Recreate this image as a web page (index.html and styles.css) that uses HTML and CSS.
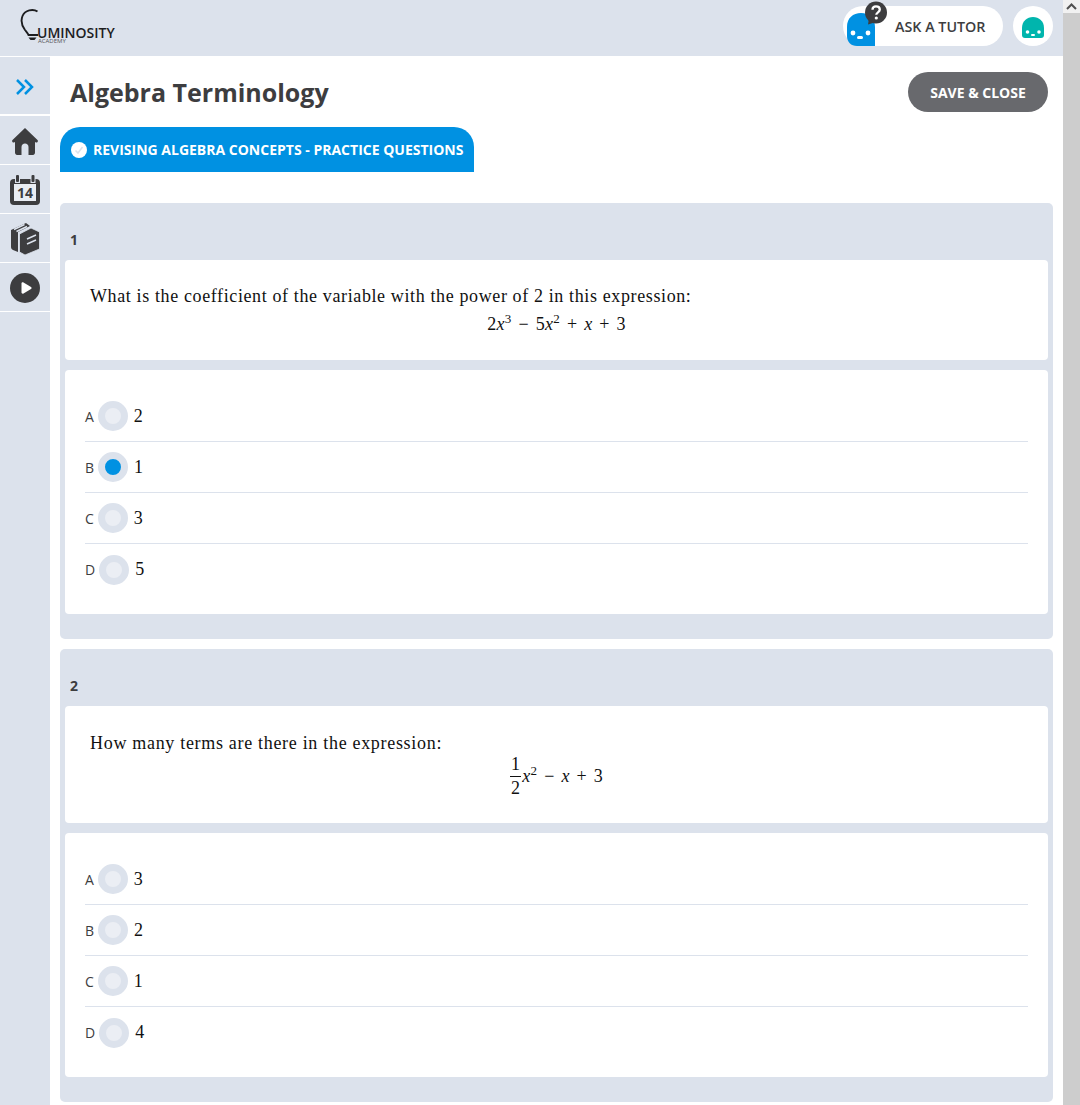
FILE: index.html
```html
<!DOCTYPE html>
<html lang="en">
  <head>
    <meta charset="UTF-8" />
    <meta name="viewport" content="width=device-width, initial-scale=1.0" />
    <title>Algebra Terminology</title>
    <link rel="stylesheet" href="styles.css">
  </head>
  <body>
    <div class="page">
      <div class="app">
        <header class="topbar">
          <div class="logo">
            <svg class="logo-bulb" width="24" height="36" viewBox="0 0 24 36">
              <path d="M18.500 5.500C14 2.500 6 4 3.500 10C1.500 15 3 20 6 24C8 26.500 9 27.500 9.500 29H19" fill="none" stroke="#1d1d1f" stroke-width="1.900"/>
              <path d="M9.500 31.500H17.500L15.500 34H11.500Z" fill="#1d1d1f"/>
            </svg>
            <span class="logo-name">UMINOSITY</span>
            <span class="logo-sub">ACADEMY</span>
          </div>
          <div class="tutor">
            <a class="tutor-pill">
              <svg class="tutor-face" width="46" height="46" viewBox="0 0 46 46">
                <path d="M4 46V27C4 18 10 13 18 13C26 13 32 18 32 27V46H14C8 46 4 42 4 36Z" fill="#0091e2"/>
                <circle cx="10" cy="33" r="2.400" fill="#fff"/>
                <circle cx="25" cy="33" r="2.400" fill="#fff"/>
                <rect x="14" y="36" width="6" height="3" rx="1.500" fill="#fff"/>
                <circle cx="33" cy="12.500" r="11" fill="#3d3d3f"/>
                <path d="M26 18L25 24.500L33 22Z" fill="#3d3d3f"/>
                <path d="M29.500 9.800C29.500 7.500 31 6.300 33 6.300C35.200 6.300 36.800 7.600 36.800 9.600C36.800 12.300 33.300 12.300 33.300 14.800" fill="none" stroke="#fff" stroke-width="2.300"/>
                <circle cx="33.300" cy="18" r="1.600" fill="#fff"/>
              </svg>
              <span>ASK A TUTOR</span>
            </a>
            <a class="avatar">
              <svg width="22" height="21" viewBox="0 0 22 21">
                <path d="M0 11C0 4 5 0 11 0C17 0 22 4 22 11V18C22 20 21 21 19 21H3C1 21 0 20 0 18Z" fill="#00b5ad"/>
                <circle cx="5.500" cy="15" r="1.800" fill="#fff"/>
                <circle cx="17" cy="15" r="1.800" fill="#fff"/>
                <rect x="9" y="17" width="4" height="2" rx="1" fill="#fff"/>
              </svg>
            </a>
          </div>
        </header>

        <div class="layout">
          <nav class="sidebar">
            <a class="side-toggle">
              <svg width="20" height="18" viewBox="0 0 20 18">
                <path d="M2 2L9 9L2 16M10 2L17 9L10 16" fill="none" stroke="#0091e2" stroke-width="2.500"/>
              </svg>
            </a>
            <a class="side-item">
              <svg width="26" height="28" viewBox="0 0 26 28">
                <path d="M13 1L25.500 13C26.500 14 25.500 16 24 15.500L23 15V25.500C23 27 22 28 21 28H16.500V20C16.500 18 15 16.500 13 16.500C11 16.500 9.500 18 9.500 20V28H5C4 28 3 27 3 25.500V15L2 15.500C.5 16 -.5 14 .5 13Z" fill="#3d3d3f"/>
              </svg>
            </a>
            <a class="side-item">
              <svg width="30" height="30" viewBox="0 0 30 30">
                <rect x="0" y="4" width="30" height="26" rx="4" fill="#3d3d3f"/>
                <rect x="4" y="9" width="22" height="17" fill="#e9edf3"/>
                <rect x="5" y="0" width="5" height="8" fill="#dce2ec"/>
                <rect x="20.500" y="0" width="5" height="8" fill="#dce2ec"/>
                <rect x="6" y="0" width="3" height="7" rx="1" fill="#3d3d3f"/>
                <rect x="21.500" y="0" width="3" height="7" rx="1" fill="#3d3d3f"/>
                <text class="cal-day" x="15" y="23" text-anchor="middle">14</text>
              </svg>
            </a>
            <a class="side-item">
              <svg width="30" height="34" viewBox="0 0 30 34">
                <path d="M1 8L16 1L20 4L8 10V30L3 28C2 27.500 1 26.500 1 25Z" fill="#3d3d3f"/>
                <path d="M9.500 12L21 6L29.500 10V27L15 33L9.500 30Z" fill="#3d3d3f" stroke="#dce2ec" stroke-width=".8"/>
                <path d="M4 7.500L14.500 2.500M6.500 9.500L17 4.500M17 17L26 13M17 22L26 18" fill="none" stroke="#dce2ec" stroke-width="1.500"/>
              </svg>
            </a>
            <a class="side-item">
              <svg width="30" height="30" viewBox="0 0 30 30">
                <circle cx="15" cy="15" r="15" fill="#3d3d3f"/>
                <path d="M11.500 10.500C11.500 9.500 12.500 9 13.500 9.500L21 14C21.800 14.500 21.800 15.500 21 16L13.500 20.500C12.500 21 11.500 20.500 11.500 19.500Z" fill="#fff"/>
              </svg>
            </a>
          </nav>

          <main class="content">
            <div class="title-row">
              <h1>Algebra Terminology</h1>
              <button class="save-btn">SAVE &amp; CLOSE</button>
            </div>

            <div class="tab">
              <svg width="16" height="16" viewBox="0 0 16 16">
                <circle cx="8" cy="8" r="8" fill="#fff"/>
                <path d="M4.500 8.500L7 11L11.500 5" fill="none" stroke="#dce2ec" stroke-width="1.500"/>
              </svg>
              <span>REVISING ALGEBRA CONCEPTS - PRACTICE QUESTIONS</span>
            </div>

            <section class="question">
              <div class="q-num">1</div>
              <div class="card q-text q-text-short">
                <p>What is the coefficient of the variable with the power of 2 in this expression:</p>
                <div class="math"><span>2<i>x</i><sup>3</sup> &minus; 5<i>x</i><sup>2</sup> + <i>x</i> + 3</span></div>
              </div>
              <div class="card answers">
                <label class="answer"><span class="letter">A</span><span class="radio"></span><span class="val">2</span></label>
                <label class="answer"><span class="letter">B</span><span class="radio checked"></span><span class="val">1</span></label>
                <label class="answer"><span class="letter">C</span><span class="radio"></span><span class="val">3</span></label>
                <label class="answer"><span class="letter">D</span><span class="radio"></span><span class="val">5</span></label>
              </div>
            </section>

            <section class="question">
              <div class="q-num">2</div>
              <div class="card q-text q-text-tall">
                <p>How many terms are there in the expression:</p>
                <div class="math math-frac">
                  <span class="frac"><span class="top">1</span><span>2</span></span>
                  <span class="frac-rest"><i>x</i><sup>2</sup> &minus; <i>x</i> + 3</span>
                </div>
              </div>
              <div class="card answers">
                <label class="answer"><span class="letter">A</span><span class="radio"></span><span class="val">3</span></label>
                <label class="answer"><span class="letter">B</span><span class="radio"></span><span class="val">2</span></label>
                <label class="answer"><span class="letter">C</span><span class="radio"></span><span class="val">1</span></label>
                <label class="answer"><span class="letter">D</span><span class="radio"></span><span class="val">4</span></label>
              </div>
            </section>
          </main>
        </div>
      </div>

      <div class="scrollbar">
        <div class="scroll-up">
          <svg width="11" height="7" viewBox="0 0 11 7">
            <path d="M1 6L5.500 1.500L10 6" fill="none" stroke="#505050" stroke-width="2"/>
          </svg>
        </div>
      </div>
    </div>
  </body>
</html>
```

FILE: styles.css
```css
* {
  box-sizing: border-box;
}
html,
body {
  margin: 0;
  height: 1105px;
  overflow: hidden;
}
body {
  font-family: "Open Sans", sans-serif;
  color: #3d3d3f;
  background: white;
}
.page {
  display: flex;
  height: 1105px;
}
.app {
  flex: 1;
  min-width: 0;
}
.scrollbar {
  width: 17px;
  background: #cdcdcd;
}
.scroll-up {
  height: 13px;
  background: #f1f1f1;
  display: flex;
  align-items: center;
  justify-content: center;
}

/* top bar */
.topbar {
  height: 56px;
  background: #dce2ec;
  display: flex;
  justify-content: space-between;
  padding: 6px 10px 0 19px;
}
.logo {
  position: relative;
  width: 110px;
  color: #1d1d1f;
}
.logo-bulb {
  position: absolute;
  left: 0;
  top: 0;
}
.logo-name {
  position: absolute;
  left: 18px;
  top: 21px;
  font-size: 14px;
  font-weight: 600;
  line-height: 11px;
}
.logo-sub {
  position: absolute;
  left: 19px;
  top: 32px;
  font-size: 6px;
  line-height: 7px;
  color: #55565a;
}
.tutor {
  display: flex;
  gap: 10px;
}
.tutor-pill {
  position: relative;
  width: 160px;
  height: 40px;
  background: white;
  border-radius: 20px;
  display: flex;
  align-items: center;
  padding-left: 52px;
  font-size: 14.300px;
  font-weight: 600;
}
.tutor-face {
  position: absolute;
  left: 0;
  top: 0;
  margin-top: -6px;
  overflow: hidden;
}
.avatar {
  width: 40px;
  height: 40px;
  background: white;
  border-radius: 50%;
  display: flex;
  align-items: center;
  justify-content: center;
  padding-top: 3px;
}

/* sidebar */
.layout {
  display: flex;
  height: 1049px;
}
.sidebar {
  width: 50px;
  margin-top: 1px;
  background: #dce2ec;
  flex-shrink: 0;
}
.side-toggle {
  height: 59px;
  display: flex;
  align-items: center;
  justify-content: center;
  padding-top: 3px;
  border-bottom: 2px solid white;
}
.side-item {
  height: 49px;
  display: flex;
  align-items: center;
  justify-content: center;
  padding-top: 2px;
  border-bottom: 1px solid white;
}
.cal-day {
  font-family: "Open Sans", sans-serif;
  font-size: 14px;
  font-weight: 700;
  fill: #3d3d3f;
}

/* main column */
.content {
  flex: 1;
  min-width: 0;
  padding: 16px 10px 0;
}
.title-row {
  display: flex;
  justify-content: space-between;
  align-items: center;
  height: 40px;
  padding: 0 5px 0 10px;
}
h1 {
  margin: 0;
  font-size: 25px;
  font-weight: 700;
}
.save-btn {
  width: 140px;
  height: 40px;
  border: none;
  border-radius: 20px;
  background: #68696d;
  color: white;
  font-family: "Open Sans", sans-serif;
  font-size: 14px;
  font-weight: 700;
}
.tab {
  display: inline-flex;
  align-items: center;
  gap: 6px;
  height: 45px;
  margin-top: 15px;
  padding: 0 11px 0 11px;
  background: #0091e2;
  color: white;
  border-radius: 20px 20px 0 0;
  font-size: 14px;
  font-weight: 700;
  vertical-align: top;
}

/* questions */
.question {
  background: #dce2ec;
  border-radius: 5px;
  padding: 0 5px 25px;
  margin-bottom: 10px;
}
.tab + .question {
  margin-top: 31px;
}
.q-num {
  height: 57px;
  padding: 27px 0 0 5px;
  font-size: 14px;
  font-weight: 700;
  line-height: 20px;
}
.card {
  background: white;
  border-radius: 4px;
}
.q-text {
  padding: 23px 25px 0;
  font-family: "Liberation Serif", serif;
  font-size: 18px;
  line-height: 26px;
  color: #111;
}
.q-text p {
  margin: 0;
  letter-spacing: 0.62px;
}
.q-text-short {
  height: 100px;
}
.q-text-tall {
  height: 117px;
  padding-top: 24px;
}
.q-text-tall p {
  letter-spacing: 0.69px;
}
.math {
  display: flex;
  justify-content: center;
  margin-top: 2px;
  letter-spacing: 0.3px;
  word-spacing: 2px;
}
.math sup {
  font-size: 13px;
  line-height: 0;
  vertical-align: 7px;
}
.math-frac {
  align-items: center;
  margin-top: -3px;
}
.frac {
  display: inline-flex;
  flex-direction: column;
  align-items: center;
  line-height: 23px;
  margin-right: 1px;
}
.frac .top {
  border-bottom: 1px solid #111;
  padding: 0 1px;
}
.frac-rest {
  margin-bottom: 2px;
}
.answers {
  margin-top: 10px;
  padding: 21px 20px 19px;
}
.answer {
  display: flex;
  align-items: center;
  height: 51px;
  border-bottom: 1px solid #dce2ec;
}
.answer:last-child {
  border-bottom: none;
}
.letter {
  font-size: 14px;
  margin-right: 4px;
}
.radio {
  width: 30px;
  height: 30px;
  border-radius: 50%;
  border: 7px solid #dce2ec;
  background: #ebeef4;
}
.radio.checked {
  background: #0091e2;
}
.val {
  margin-left: 6px;
  font-family: "Liberation Serif", serif;
  font-size: 18px;
  color: #111;
}
```
